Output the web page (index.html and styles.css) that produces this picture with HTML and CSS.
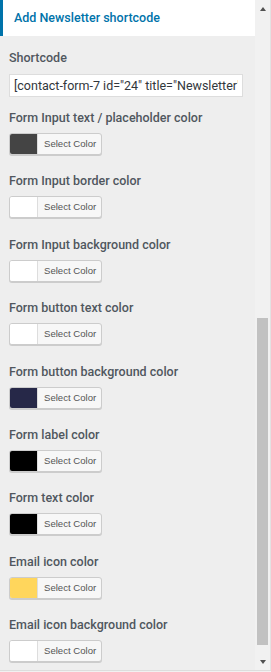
FILE: index.html
```html
<!DOCTYPE html>
<html lang="en">
  <head>
    <meta charset="UTF-8" />
    <meta name="viewport" content="width=device-width, initial-scale=1.0" />
    <title>Add Newsletter shortcode</title>
    <link rel="stylesheet" href="styles.css">
  </head>
  <body>
    <div class="frame">
      <div class="panel">
        <div class="section-title">Add Newsletter shortcode</div>
        <div class="controls">
          <div class="control shortcode">
            <label for="shortcode">Shortcode</label>
            <input type="text" id="shortcode" value='[contact-form-7 id="24" title="Newsletter"]' />
          </div>

          <div class="control">
            <label>Form Input text / placeholder color</label>
            <button class="color-result"><span class="swatch" style="background: #444444"></span><span class="color-text">Select Color</span></button>
          </div>
          <div class="control">
            <label>Form Input border color</label>
            <button class="color-result"><span class="swatch" style="background: #ffffff"></span><span class="color-text">Select Color</span></button>
          </div>
          <div class="control">
            <label>Form Input background color</label>
            <button class="color-result"><span class="swatch" style="background: #ffffff"></span><span class="color-text">Select Color</span></button>
          </div>
          <div class="control">
            <label>Form button text color</label>
            <button class="color-result"><span class="swatch" style="background: #ffffff"></span><span class="color-text">Select Color</span></button>
          </div>
          <div class="control">
            <label>Form button background color</label>
            <button class="color-result"><span class="swatch" style="background: #262848"></span><span class="color-text">Select Color</span></button>
          </div>
          <div class="control">
            <label>Form label color</label>
            <button class="color-result"><span class="swatch" style="background: #000000"></span><span class="color-text">Select Color</span></button>
          </div>
          <div class="control">
            <label>Form text color</label>
            <button class="color-result"><span class="swatch" style="background: #000000"></span><span class="color-text">Select Color</span></button>
          </div>
          <div class="control">
            <label>Email icon color</label>
            <button class="color-result"><span class="swatch" style="background: #ffd65c"></span><span class="color-text">Select Color</span></button>
          </div>
          <div class="control">
            <label>Email icon background color</label>
            <button class="color-result"><span class="swatch" style="background: #ffffff"></span><span class="color-text">Select Color</span></button>
          </div>
        </div>
      </div>

      <div class="scrollbar">
        <div class="arrow up"></div>
        <div class="track">
          <div class="thumb"></div>
        </div>
        <div class="arrow down"></div>
      </div>
    </div>
  </body>
</html>
```

FILE: styles.css
```css
body {
  margin: 0;
  font-family: Roboto, "Liberation Sans", Arial, sans-serif;
  background: #f1f1f1;
}
.frame {
  display: flex;
  width: 271px;
  height: 670px;
  border-bottom: 1px solid #dddddd;
  overflow: hidden;
}
.panel {
  width: 255px;
  background: #eeeeee;
  overflow: hidden;
}
.section-title {
  height: 36px;
  box-sizing: border-box;
  background: #ffffff;
  border-left: 3px solid #0073aa;
  padding-left: 11px;
  color: #0073aa;
  font-size: 12.5px;
  font-weight: 500;
  line-height: 35px;
  white-space: nowrap;
}
.controls {
  padding: 13px 0 0 9px;
}
.control {
  margin-bottom: 17.4px;
}
.control label {
  display: block;
  font-size: 12.5px;
  font-weight: 500;
  line-height: 18px;
  color: #50575e;
  margin-bottom: 6px;
  white-space: nowrap;
}
.shortcode {
  margin-bottom: 12px;
}
.shortcode label {
  margin-bottom: 7px;
}
.shortcode input {
  width: 234px;
  height: 23px;
  box-sizing: border-box;
  border: 1px solid #dddddd;
  background: #ffffff;
  padding: 0 4px;
  font-family: inherit;
  font-size: 12.5px;
  color: #32373c;
  outline: none;
}
.color-result {
  display: flex;
  height: 22px;
  padding: 0;
  border: 1px solid #cccccc;
  border-radius: 3px;
  box-shadow: 0 1px 0 #cccccc;
  background: #f7f7f7;
  overflow: hidden;
  cursor: pointer;
}
.swatch {
  width: 27px;
  height: 100%;
}
.color-text {
  border-left: 1px solid #dddddd;
  padding: 0 5px 0 6px;
  font-family: inherit;
  font-size: 9.6px;
  line-height: 20px;
  color: #555555;
  white-space: nowrap;
}
.scrollbar {
  width: 15px;
  display: flex;
  flex-direction: column;
  background: #f1f1f1;
  border-right: 1px solid #e2e2e2;
}
.arrow {
  height: 17px;
  display: flex;
  justify-content: center;
  align-items: center;
}
.arrow::before {
  content: "";
  border-left: 3.5px solid transparent;
  border-right: 3.5px solid transparent;
}
.arrow.up::before {
  border-bottom: 4px solid #505050;
}
.arrow.down::before {
  border-top: 4px solid #505050;
}
.track {
  flex: 1;
  display: flex;
  flex-direction: column;
  justify-content: flex-end;
  padding: 0 2px;
}
.thumb {
  height: 327px;
  margin-bottom: 8px;
  background: #c1c1c1;
}
```
